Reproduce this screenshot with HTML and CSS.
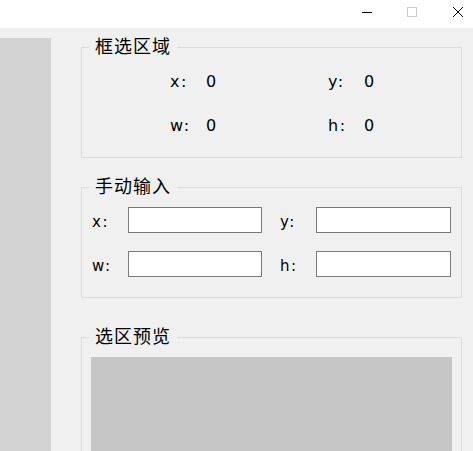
FILE: index.html
```html
<!DOCTYPE html>
<html lang="zh">
<head>
<meta charset="utf-8">
<title>选区</title>
<link rel="stylesheet" href="styles.css">
</head>
<body>
<div class="window">
  <div class="titlebar">
    <svg class="tb-icon" width="10" height="10" viewBox="0 0 10 10"><line x1="0" y1="5.5" x2="10" y2="5.5" stroke="#000" stroke-width="1"/></svg>
    <svg class="tb-icon" width="10" height="10" viewBox="0 0 10 10"><rect x="0.5" y="0.5" width="9" height="9" fill="none" stroke="#cccccc" stroke-width="1"/></svg>
    <svg class="tb-icon" width="10" height="10" viewBox="0 0 10 10"><path d="M0 0 L10 10 M10 0 L0 10" stroke="#000" stroke-width="1" fill="none"/></svg>
  </div>
  <div class="main">
    <div class="sidebar"></div>
    <div class="panel">
      <fieldset class="group group-select">
        <legend>框选区域</legend>
        <div class="readout">
          <div class="cell"><span class="rlabel">x:</span><span>0</span></div>
          <div class="cell"><span class="rlabel">y:</span><span>0</span></div>
          <div class="cell"><span class="rlabel">w:</span><span>0</span></div>
          <div class="cell"><span class="rlabel">h:</span><span>0</span></div>
        </div>
      </fieldset>
      <fieldset class="group group-input">
        <legend>手动输入</legend>
        <div class="inputs">
          <label class="pair"><span class="ilabel">x:</span><input class="field" type="text"></label>
          <label class="pair"><span class="ilabel">y:</span><input class="field" type="text"></label>
          <label class="pair"><span class="ilabel">w:</span><input class="field" type="text"></label>
          <label class="pair"><span class="ilabel">h:</span><input class="field" type="text"></label>
        </div>
      </fieldset>
      <fieldset class="group group-preview">
        <legend>选区预览</legend>
        <div class="preview"></div>
      </fieldset>
    </div>
  </div>
</div>
</body>
</html>
```
FILE: styles.css
```css
html, body {
  margin: 0;
  padding: 0;
  background: #f0f0f0;
  overflow: hidden;
}
.window {
  width: 473px;
  height: 451px;
  overflow: hidden;
  display: flex;
  flex-direction: column;
  font-family: "DejaVu Sans", "Noto Sans CJK SC", sans-serif;
  color: #000;
}
.titlebar {
  height: 28px;
  flex: none;
  background: #ffffff;
  display: flex;
  justify-content: flex-end;
  align-items: flex-start;
  padding-right: 10px;
  gap: 35px;
}
.tb-icon {
  display: block;
  margin-top: 7px;
}
.tb-icon:last-child {
  margin-left: 1px;
}
.main {
  flex: 1;
  display: flex;
  gap: 30px;
  min-height: 0;
  overflow: hidden;
}
.sidebar {
  width: 51px;
  margin-top: 10px;
  background: #d3d3d3;
}
.panel {
  width: 381px;
  padding-top: 7px;
  display: flex;
  flex-direction: column;
}
.group {
  margin: 0;
  padding: 0;
  border: 1px solid #dcdcdc;
  min-width: 0;
}
.group legend {
  margin-left: 7px;
  padding: 0 6px 5px 6px;
  font-family: "Noto Sans CJK SC", sans-serif;
  font-size: 18px;
  line-height: 20px;
  letter-spacing: 1px;
}
.group-input {
  margin-top: 17px;
}
.group-preview {
  margin-top: 27px;
  flex: none;
}
.readout {
  display: grid;
  grid-template-columns: 158px auto;
  row-gap: 24px;
  padding: 12px 0 21px 88px;
  font-size: 16px;
  line-height: 20px;
}
.cell {
  display: flex;
}
.rlabel {
  width: 36px;
  letter-spacing: 1.5px;
}
.inputs {
  display: grid;
  grid-template-columns: 170px 171px;
  column-gap: 18px;
  row-gap: 18px;
  padding: 7px 0 20px 10px;
}
.pair {
  display: flex;
  align-items: flex-start;
}
.ilabel {
  flex: none;
  width: 36px;
  font-size: 15px;
  line-height: 26px;
  padding-top: 2px;
  height: 24px;
  letter-spacing: 1.5px;
}
.field {
  flex: 1;
  box-sizing: border-box;
  min-width: 0;
  height: 26px;
  margin: 0;
  padding: 0 4px;
  border: 1px solid #7a7a7a;
  border-radius: 0;
  background: #ffffff;
  outline: none;
  font-size: 14px;
}
.preview {
  margin: 7px 9px 0 9px;
  height: 100px;
  background: #c6c6c6;
}
```
